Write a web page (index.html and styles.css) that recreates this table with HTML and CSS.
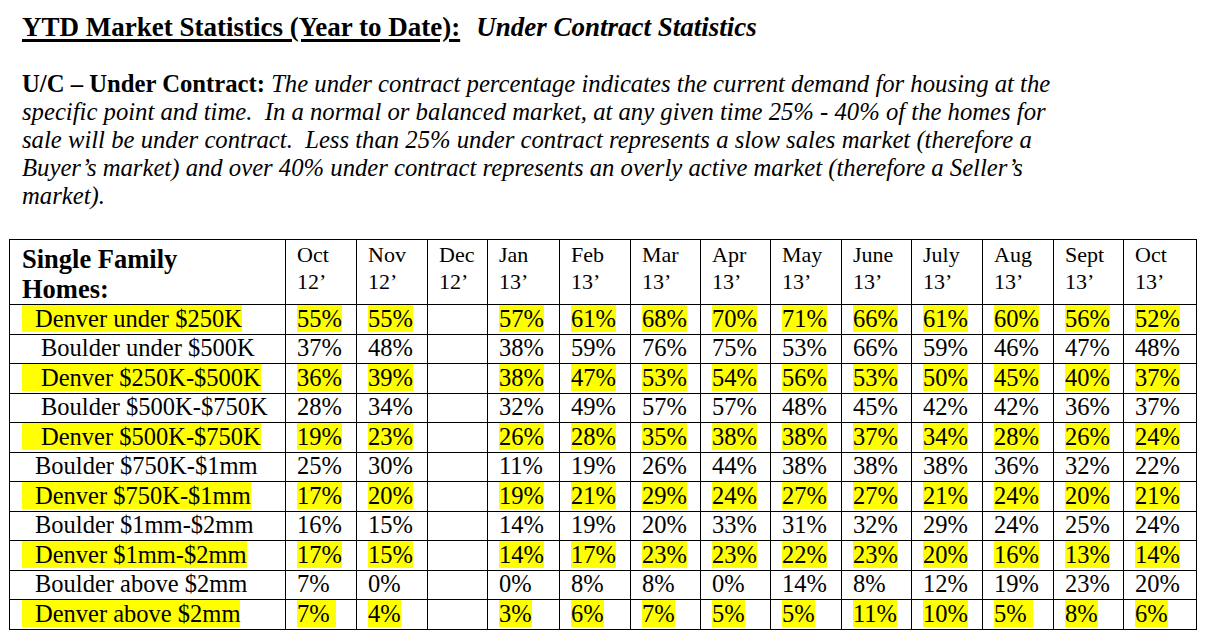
FILE: index.html
```html
<!DOCTYPE html>
<html lang="en">
<head>
<meta charset="utf-8">
<title>YTD Market Statistics – Under Contract Statistics</title>
<link rel="stylesheet" href="styles.css">
</head>
<body>
<div class="page">
  <h1 class="title"><span class="title-main">YTD Market Statistics (Year to Date):</span><span class="title-sub">Under Contract Statistics</span></h1>
  <p class="intro"><b>U/C – Under Contract:</b> The under contract percentage indicates the current demand for housing at the<br>specific point and time.&nbsp; In a normal or balanced market, at any given time 25% - 40% of the homes for<br>sale will be under contract.&nbsp; Less than 25% under contract represents a slow sales market (therefore a<br>Buyer’s market) and over 40% under contract represents an overly active market (therefore a Seller’s<br>market).</p>
  <table class="stats">
    <colgroup>
      <col class="c-label"><col class="c71"><col class="c71"><col class="c60"><col class="c72"><col class="c71"><col class="c70"><col class="c70"><col class="c71"><col class="c70"><col class="c71"><col class="c71"><col class="c70"><col class="c73">
    </colgroup>
    <thead>
      <tr class="head-row">
        <th class="label-head">Single Family<br>Homes:</th>
        <th>Oct<br>12’</th><th>Nov<br>12’</th><th>Dec<br>12’</th><th>Jan<br>13’</th><th>Feb<br>13’</th><th>Mar<br>13’</th><th>Apr<br>13’</th><th>May<br>13’</th><th>June<br>13’</th><th>July<br>13’</th><th>Aug<br>13’</th><th>Sept<br>13’</th><th>Oct<br>13’</th>
      </tr>
    </thead>
    <tbody>
      <tr class="data-row">
        <td class="label"><span class="hl ind-a">Denver under $250K</span></td>
        <td><span class="hl">55%</span></td><td><span class="hl">55%</span></td><td></td><td><span class="hl">57%</span></td><td><span class="hl">61%</span></td><td><span class="hl">68%</span></td><td><span class="hl">70%</span></td><td><span class="hl">71%</span></td><td><span class="hl">66%</span></td><td><span class="hl">61%</span></td><td><span class="hl">60%</span></td><td><span class="hl">56%</span></td><td><span class="hl">52%</span></td>
      </tr>
      <tr class="data-row">
        <td class="label"><span class="ind-b">Boulder under $500K</span></td>
        <td>37%</td><td>48%</td><td></td><td>38%</td><td>59%</td><td>76%</td><td>75%</td><td>53%</td><td>66%</td><td>59%</td><td>46%</td><td>47%</td><td>48%</td>
      </tr>
      <tr class="data-row">
        <td class="label"><span class="hl ind-b">Denver $250K-$500K</span></td>
        <td><span class="hl">36%</span></td><td><span class="hl">39%</span></td><td></td><td><span class="hl">38%</span></td><td><span class="hl">47%</span></td><td><span class="hl">53%</span></td><td><span class="hl">54%</span></td><td><span class="hl">56%</span></td><td><span class="hl">53%</span></td><td><span class="hl">50%</span></td><td><span class="hl">45%</span></td><td><span class="hl">40%</span></td><td><span class="hl">37%</span></td>
      </tr>
      <tr class="data-row">
        <td class="label"><span class="ind-b">Boulder $500K-$750K</span></td>
        <td>28%</td><td>34%</td><td></td><td>32%</td><td>49%</td><td>57%</td><td>57%</td><td>48%</td><td>45%</td><td>42%</td><td>42%</td><td>36%</td><td>37%</td>
      </tr>
      <tr class="data-row">
        <td class="label"><span class="hl ind-b">Denver $500K-$750K</span></td>
        <td><span class="hl">19%</span></td><td><span class="hl">23%</span></td><td></td><td><span class="hl">26%</span></td><td><span class="hl">28%</span></td><td><span class="hl">35%</span></td><td><span class="hl">38%</span></td><td><span class="hl">38%</span></td><td><span class="hl">37%</span></td><td><span class="hl">34%</span></td><td><span class="hl">28%</span></td><td><span class="hl">26%</span></td><td><span class="hl">24%</span></td>
      </tr>
      <tr class="data-row">
        <td class="label"><span class="ind-a">Boulder $750K-$1mm</span></td>
        <td>25%</td><td>30%</td><td></td><td>11%</td><td>19%</td><td>26%</td><td>44%</td><td>38%</td><td>38%</td><td>38%</td><td>36%</td><td>32%</td><td>22%</td>
      </tr>
      <tr class="data-row">
        <td class="label"><span class="hl ind-a">Denver $750K-$1mm</span></td>
        <td><span class="hl">17%</span></td><td><span class="hl">20%</span></td><td></td><td><span class="hl">19%</span></td><td><span class="hl">21%</span></td><td><span class="hl">29%</span></td><td><span class="hl">24%</span></td><td><span class="hl">27%</span></td><td><span class="hl">27%</span></td><td><span class="hl">21%</span></td><td><span class="hl">24%</span></td><td><span class="hl">20%</span></td><td><span class="hl">21%</span></td>
      </tr>
      <tr class="data-row">
        <td class="label"><span class="ind-a">Boulder $1mm-$2mm</span></td>
        <td>16%</td><td>15%</td><td></td><td>14%</td><td>19%</td><td>20%</td><td>33%</td><td>31%</td><td>32%</td><td>29%</td><td>24%</td><td>25%</td><td>24%</td>
      </tr>
      <tr class="data-row">
        <td class="label"><span class="hl ind-a">Denver $1mm-$2mm</span></td>
        <td><span class="hl">17%</span></td><td><span class="hl">15%</span></td><td></td><td><span class="hl">14%</span></td><td><span class="hl">17%</span></td><td><span class="hl">23%</span></td><td><span class="hl">23%</span></td><td><span class="hl">22%</span></td><td><span class="hl">23%</span></td><td><span class="hl">20%</span></td><td><span class="hl">16%</span></td><td><span class="hl">13%</span></td><td><span class="hl">14%</span></td>
      </tr>
      <tr class="data-row">
        <td class="label"><span class="ind-a">Boulder above $2mm</span></td>
        <td>7%</td><td>0%</td><td></td><td>0%</td><td>8%</td><td>8%</td><td>0%</td><td>14%</td><td>8%</td><td>12%</td><td>19%</td><td>23%</td><td>20%</td>
      </tr>
      <tr class="data-row">
        <td class="label"><span class="hl ind-a">Denver above $2mm</span></td>
        <td><span class="hl">7%&nbsp;</span></td><td><span class="hl">4%</span></td><td></td><td><span class="hl">3%</span></td><td><span class="hl">6%</span></td><td><span class="hl">7%</span></td><td><span class="hl">5%</span></td><td><span class="hl">5%</span></td><td><span class="hl">11%</span></td><td><span class="hl">10%</span></td><td><span class="hl">5%&nbsp;</span></td><td><span class="hl">8%</span></td><td><span class="hl">6%</span></td>
      </tr>
    </tbody>
  </table>
</div>
</body>
</html>
```

FILE: styles.css
```css
html, body {
  margin: 0;
  padding: 0;
  background: #ffffff;
  color: #000000;
  font-family: "Liberation Serif", "Times New Roman", serif;
}

.page {
  padding-top: 12px;
}

.title {
  margin: 0 0 0 22px;
  font-size: 27px;
  line-height: 30px;
  font-weight: bold;
  white-space: nowrap;
}

.title-main {
  text-decoration: underline;
  text-decoration-thickness: 3px;
  text-underline-offset: 3px;
}

.title-sub {
  font-style: italic;
  margin-left: 16px;
}

.intro {
  margin: 28px 0 0 22px;
  font-size: 24.7px;
  line-height: 28px;
  font-style: italic;
  white-space: nowrap;
}

.intro b {
  font-style: normal;
  font-weight: bold;
}

.stats {
  margin: 29px 0 0 9px;
  border-collapse: collapse;
  table-layout: fixed;
  width: 1187px;
}

.c-label { width: 276px; }
.c60 { width: 60px; }
.c70 { width: 70px; }
.c71 { width: 71px; }
.c72 { width: 72px; }
.c73 { width: 73px; }

.stats th,
.stats td {
  border: 1px solid #000;
  padding: 0 0 0 11px;
  text-align: left;
  white-space: nowrap;
}

.head-row {
  height: 64px;
}

.stats th {
  vertical-align: top;
  font-weight: normal;
  font-size: 22px;
  line-height: 27px;
  padding-top: 1px;
}

.stats th.label-head {
  font-weight: bold;
  font-size: 26.5px;
  line-height: 30px;
  padding-top: 4px;
  padding-left: 12px;
}

.data-row {
  height: 29.5px;
}

.stats td {
  font-size: 24.5px;
  line-height: 26px;
  vertical-align: bottom;
  padding-bottom: 2px;
}

.stats td.label {
  padding-left: 12px;
}

.hl {
  background: #ffff00;
}

.ind-a {
  padding-left: 13px;
}

.ind-b {
  padding-left: 19px;
}
```
